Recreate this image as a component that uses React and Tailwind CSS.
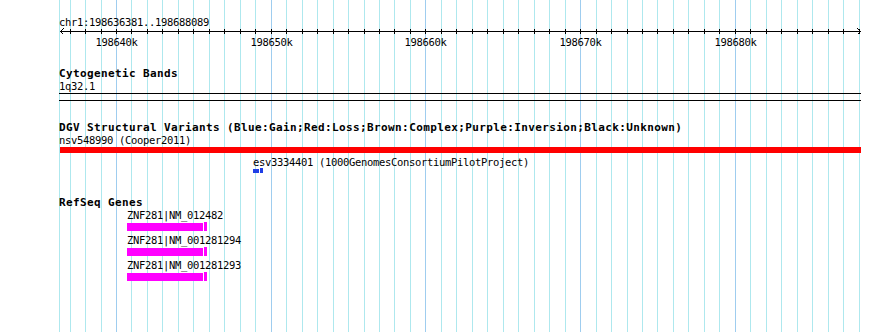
import React from "react";

// genome coordinate (in kb) -> pixel column
const colAt = (k) => Math.floor(116.5 + (k - 640) * 15.47);

const kbs = [];
for (let k = 637; k <= 688; k++) kbs.push(k);

const Grid = () => (
  <svg
    className="absolute inset-0"
    width="890"
    height="332"
    shapeRendering="crispEdges"
  >
    <rect x="59" y="0" width="1" height="332" fill="#aee8ee" />
    {kbs.map((k) => (
      <rect
        key={k}
        x={colAt(k)}
        y="0"
        width="1"
        height="332"
        fill={k % 10 === 0 ? "#9fcdef" : "#aee8ee"}
      />
    ))}
  </svg>
);

const Ruler = () => (
  <svg
    width="803"
    height="22"
    viewBox="59 28 803 22"
    shapeRendering="crispEdges"
    className="block"
  >
    <rect x="60" y="31" width="801" height="1" fill="#000" />
    {kbs.map((k) => (
      <rect key={k} x={colAt(k)} y="29" width="1" height="5" fill="#000" />
    ))}
    <path d="M60.5 31.5 L63.5 28.5 M60.5 31.5 L63.5 34.5" stroke="#000" fill="none" />
    <path d="M860.5 31.5 L857.5 28.5 M860.5 31.5 L857.5 34.5" stroke="#000" fill="none" />
    {[640, 650, 660, 670, 680].map((k) => (
      <text
        key={k}
        x={colAt(k) + 0.5}
        y="45.5"
        textAnchor="middle"
        fontFamily="'DejaVu Sans Mono', 'Liberation Mono', monospace"
        fontSize="10.5"
        letterSpacing="-0.32"
        fill="#000"
        shapeRendering="auto"
      >
        {`198${k}k`}
      </text>
    ))}
  </svg>
);

const reg = "text-[10.5px] leading-[12px] tracking-[-0.32px] whitespace-pre";
const bold = "text-[11px] leading-[12px] font-bold tracking-[0.38px] whitespace-pre";

const genes = ["ZNF281|NM_012482", "ZNF281|NM_001281294", "ZNF281|NM_001281293"];

export default function App() {
  return (
    <div className="relative w-[890px] h-[332px] overflow-hidden bg-white text-black font-['DejaVu_Sans_Mono','Liberation_Mono',monospace]">
      <Grid />
      <div className="relative flex flex-col w-[862px] pl-[59px]">
        {/* ruler */}
        <div className={`${reg} mt-[16px]`}>chr1:198636381..198688089</div>
        <Ruler />

        {/* cytogenetic bands */}
        <div className={`${bold} mt-[18px]`}>Cytogenetic Bands</div>
        <div className={reg}>1q32.1</div>
        <div className="mt-px h-px w-[802px] bg-black" />
        <div className="mt-[6px] h-px w-[802px] bg-black" />

        {/* DGV */}
        <div className={`${bold} mt-[21px]`}>
          DGV Structural Variants (Blue:Gain;Red:Loss;Brown:Complex;Purple:Inversion;Black:Unknown)
        </div>
        <div className={reg}>nsv548990 (Cooper2011)</div>
        <div className="mt-px ml-px h-[6px] w-[801px] bg-[#ff0000]" />
        <div className="ml-[194px] mt-[3px] flex flex-col">
          <div className={reg}>esv3334401 (1000GenomesConsortiumPilotProject)</div>
          <div className="flex items-center h-[5px]">
            <div className="h-[4px] w-[6px] bg-[#1f3fe6]" />
            <div className="ml-px h-[5px] w-[3px] bg-[#1f3fe6]" />
          </div>
        </div>

        {/* RefSeq */}
        <div className={`${bold} leading-[11px] mt-[24px]`}>RefSeq Genes</div>
        <div className="ml-[68px] flex flex-col">
          {genes.map((g, i) => (
            <div key={g} className={i > 0 ? "mt-[3px]" : ""}>
              <div className={reg}>{g}</div>
              <div className="mt-px flex items-center h-[9px]">
                <div className="h-[8px] w-[76px] bg-[#ff00ff]" />
                <div className="ml-px h-[9px] w-[3px] bg-[#ff00ff]" />
              </div>
            </div>
          ))}
        </div>
      </div>
    </div>
  );
}
